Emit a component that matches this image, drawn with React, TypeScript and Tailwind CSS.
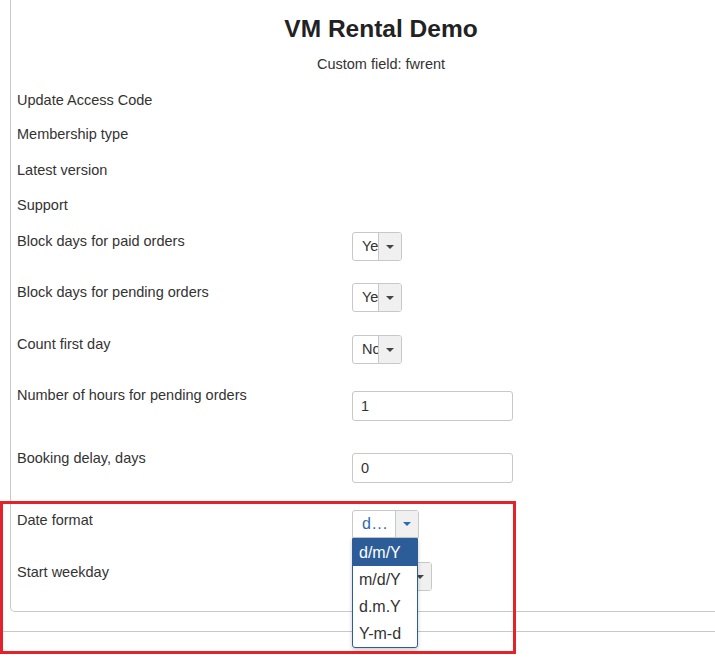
import React from "react";

const font = { fontFamily: '"Liberation Sans", Arial, sans-serif' };

function Caret({ blue }: { blue?: boolean }) {
  return (
    <span
      className={
        "block w-0 h-0 border-l-[4px] border-r-[4px] border-t-[4px] border-l-transparent border-r-transparent " +
        (blue ? "border-t-[#2a6ab0]" : "border-t-[#444]")
      }
    />
  );
}

function MiniSelect({ value }: { value: string }) {
  return (
    <div className="flex h-[29px] w-[50px] rounded-[3px] border border-[#c8c8c8] bg-white overflow-hidden">
      <div className="w-[25px] overflow-hidden whitespace-nowrap pl-[9px] leading-[27px] text-[14.5px] text-[#333]">
        {value}
      </div>
      <div className="flex-1 flex items-center justify-center border-l border-[#c8c8c8] bg-[#f0f0f0]">
        <Caret />
      </div>
    </div>
  );
}

function TextInput({ value }: { value: string }) {
  return (
    <div className="h-[30px] w-[161px] rounded-[3px] border border-[#c8c8c8] bg-white pl-[8px] leading-[28px] text-[14.5px] text-[#333]">
      {value}
    </div>
  );
}

function DateSelect() {
  const options = ["d/m/Y", "m/d/Y", "d.m.Y", "Y-m-d"];
  return (
    <div className="relative">
      <div className="flex h-[28px] w-[67px] rounded-t-[3px] border border-[#c8c8c8] bg-white">
        <div className="w-[42px] pl-[9px] leading-[26px] text-[16px] tracking-[1px] text-[#2a6ab0]">d...</div>
        <div className="flex-1 flex items-center justify-center border-l border-[#c8c8c8] bg-[#f0f0f0]">
          <Caret blue />
        </div>
      </div>
      <ul className="absolute left-0 top-[28px] z-10 w-[66px] border border-[#2c5d98] bg-white rounded-b-[3px] shadow-[0_2px_4px_rgba(0,0,0,0.2)]">
        {options.map((o, i) => (
          <li
            key={o}
            className={
              "h-[27px] pl-[6px] leading-[27px] text-[16px] " +
              (i === 0 ? "bg-[#2c5d98] text-white" : "text-[#333]")
            }
          >
            {o}
          </li>
        ))}
      </ul>
    </div>
  );
}

function WeekdaySelect() {
  return (
    <div className="flex h-[29px] w-[80px] rounded-[3px] border border-[#c8c8c8] bg-white">
      <div className="w-[55px]" />
      <div className="flex-1 flex items-center justify-center border-l border-[#c8c8c8] bg-[#f0f0f0]">
        <Caret />
      </div>
    </div>
  );
}

export default function App() {
  return (
    <div className="relative w-full h-[659px] overflow-hidden bg-white text-[#333]" style={font}>
      <div className="ml-[10px] w-[736px] border-l border-r border-b border-[#c8c8c8] rounded-b-[5px] pl-[6px]">
        <h1 className="pt-[16px] text-center text-[24.5px] leading-[26px] font-bold text-[#222]">
          VM Rental Demo
        </h1>
        <p className="mt-[12px] text-center text-[14.5px] leading-[20px]">Custom field: fwrent</p>

        <div className="mt-[16px] text-[14.5px] leading-[20px]">
          <div className="h-[34px]">Update Access Code</div>
          <div className="h-[36px]">Membership type</div>
          <div className="h-[35px]">Latest version</div>
          <div className="h-[36px]">Support</div>

          <div className="flex h-[51px]">
            <div className="w-[335px]">Block days for paid orders</div>
            <div className="mt-[1px]">
              <MiniSelect value="Yes" />
            </div>
          </div>
          <div className="flex h-[52px]">
            <div className="w-[335px]">Block days for pending orders</div>
            <div className="mt-[1px]">
              <MiniSelect value="Yes" />
            </div>
          </div>
          <div className="flex h-[51px]">
            <div className="w-[335px]">Count first day</div>
            <div className="mt-[1px]">
              <MiniSelect value="No" />
            </div>
          </div>
          <div className="flex h-[63px]">
            <div className="w-[335px]">Number of hours for pending orders</div>
            <div className="mt-[6px]">
              <TextInput value="1" />
            </div>
          </div>
          <div className="flex h-[62px]">
            <div className="w-[335px]">Booking delay, days</div>
            <div className="mt-[5px]">
              <TextInput value="0" />
            </div>
          </div>
          <div className="relative z-10 flex h-[52px]">
            <div className="w-[335px]">Date format</div>
            <DateSelect />
          </div>
          <div className="flex h-[49px]">
            <div className="w-[335px]">Start weekday</div>
            <WeekdaySelect />
          </div>
        </div>
      </div>

      <div className="mt-[19px] border-t border-[#c8c8c8]" />

      {/* highlight box */}
      <div className="absolute left-0 top-[501px] z-20 h-[153px] w-[516px] border-[3px] border-[#e4222a] pointer-events-none" />
    </div>
  );
}
